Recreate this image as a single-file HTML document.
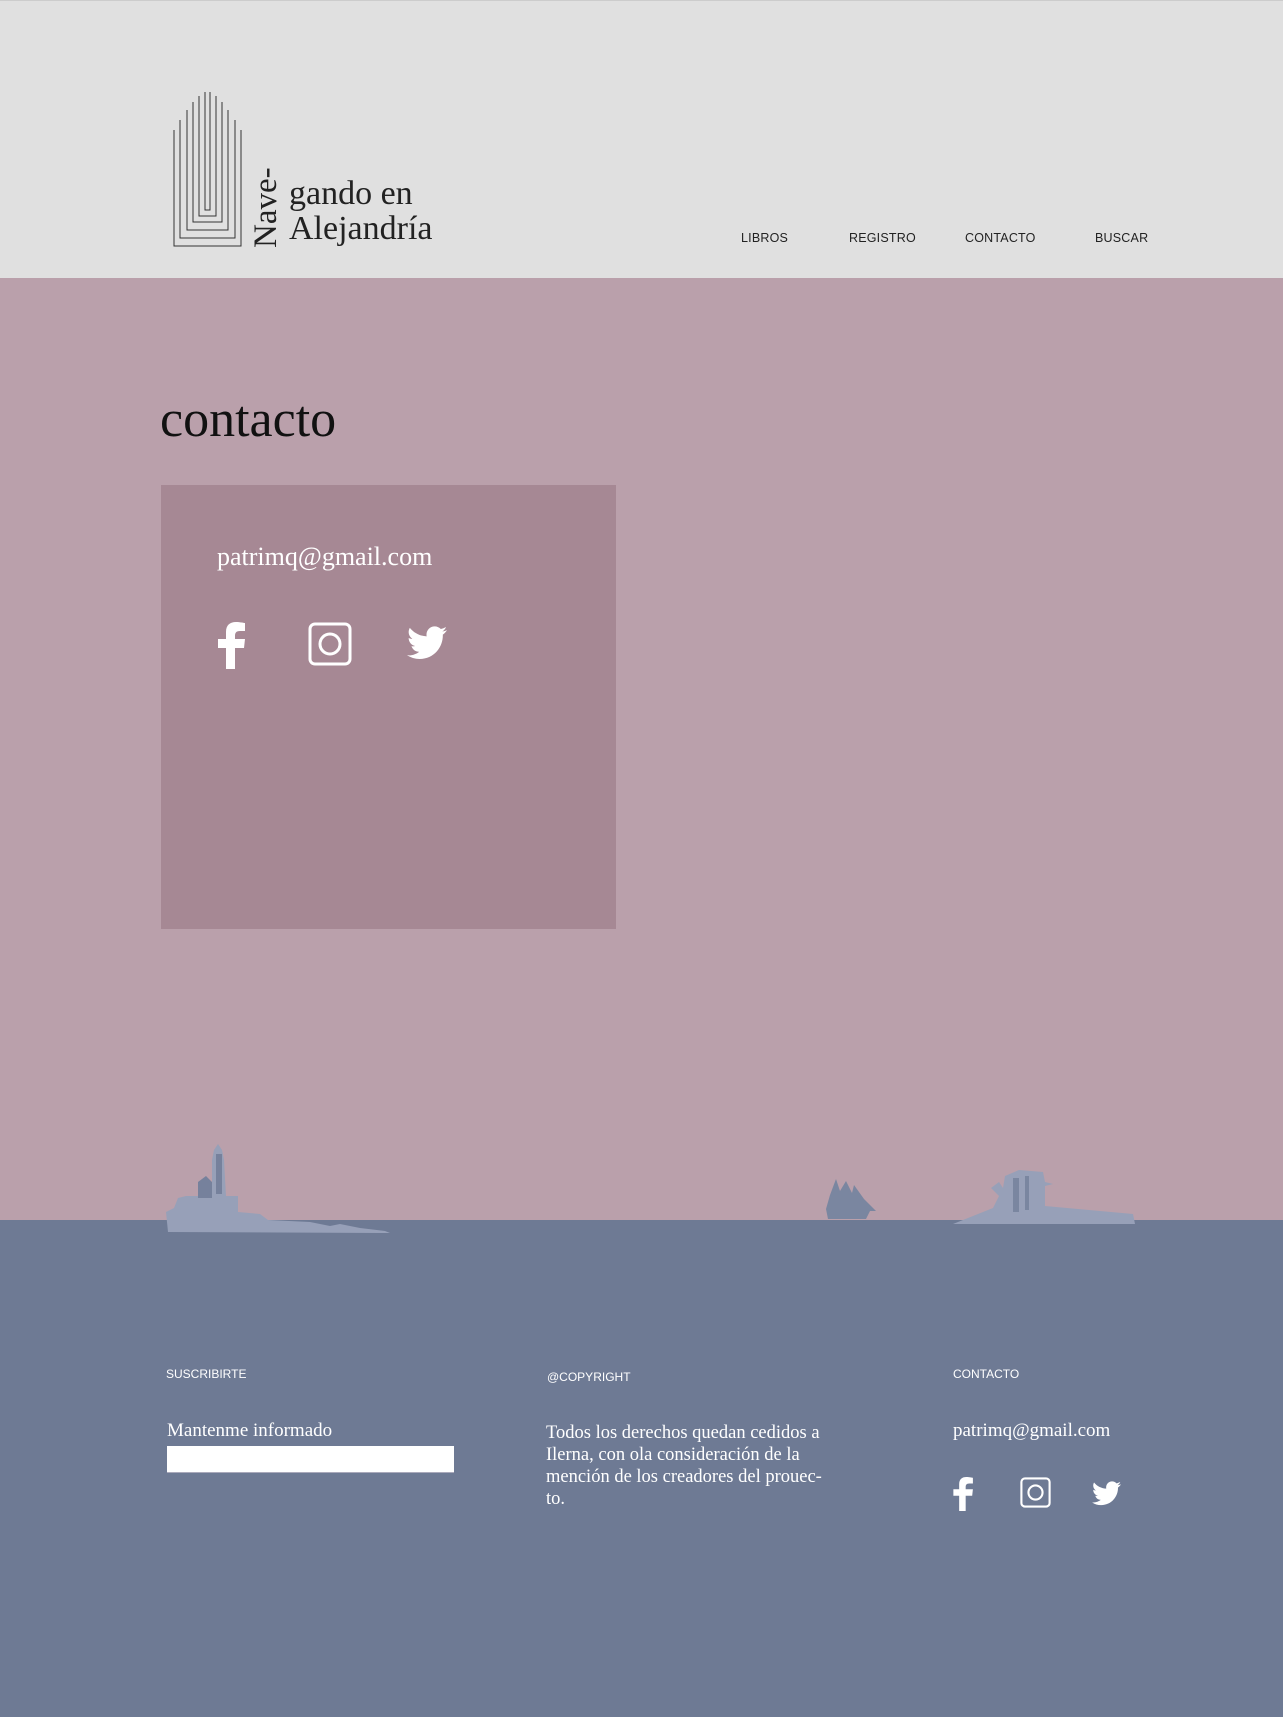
<!DOCTYPE html>
<html><head><meta charset="utf-8">
<style>
*{margin:0;padding:0;box-sizing:border-box}
body{width:1283px;height:1717px;position:relative;overflow:hidden;background:#baa0ab;font-family:"Liberation Serif",serif}
.abs{position:absolute}
.hdr{left:0;top:0;width:1283px;height:278px;background:#e0e0e0;border-top:1px solid #ccc}
.nav{top:231px;font-family:"Liberation Sans",sans-serif;font-size:12.5px;color:#222;letter-spacing:.2px}
.water{left:0;top:1220px;width:1283px;height:497px;background:#6e7a94}
.ft{font-family:"Liberation Sans",sans-serif;font-size:12px;color:#fff}
.wt{color:#fff}
</style></head><body>
<div class="abs hdr"></div>
<svg class="abs" style="left:170px;top:92px" width="80" height="160" viewBox="0 0 80 160" fill="none" stroke="#333" stroke-width="1">
<path d="M4 38V154H71V38"/><path d="M10 28V146H65V28"/><path d="M17 18V138H58V18"/><path d="M23 10V130H52V10"/><path d="M29 4V124H46V4"/><path d="M35 0V118H40V0"/>
</svg>
<div class="abs" style="left:250px;top:248px;transform:rotate(-90deg);transform-origin:0 0;font-size:33px;color:#222;white-space:nowrap;line-height:33px">Nave-</div>
<div class="abs" style="left:289px;top:176px;font-size:34px;color:#222;line-height:35px">gando en<br>Alejandría</div>
<div class="abs nav" style="left:741px">LIBROS</div>
<div class="abs nav" style="left:849px">REGISTRO</div>
<div class="abs nav" style="left:965px">CONTACTO</div>
<div class="abs nav" style="left:1095px">BUSCAR</div>

<div class="abs" style="left:160px;top:390px;font-size:52px;color:#111;line-height:60px">contacto</div>
<div class="abs" style="left:161px;top:485px;width:455px;height:444px;background:#a68894"></div>
<div class="abs wt" style="left:217px;top:542px;font-size:26px">patrimq@gmail.com</div>
<svg class="abs" style="left:218px;top:622px" width="28" height="47" viewBox="0 0 28 47"><path fill="#fff" d="M8 47V26H0V17H8V10C8 3 12 0 18 0C22 0 26 1 27 1V9H22C18 9 17 11 17 14V17H27L26 26H17V47Z"/></svg>
<svg class="abs" style="left:308px;top:622px" width="44" height="44" viewBox="0 0 44 44" fill="none" stroke="#fff" stroke-width="3"><rect x="2" y="2" width="40" height="40" rx="5"/><circle cx="22" cy="22" r="10"/></svg>
<svg class="abs" style="left:407px;top:626px" width="40" height="34" viewBox="0 0 24 20"><path fill="#fff" d="M24 2.3c-.9.4-1.8.7-2.8.8 1-.6 1.8-1.6 2.2-2.7-1 .6-2 1-3.1 1.2C19.3.6 18 0 16.6 0c-2.7 0-4.9 2.2-4.9 4.9 0 .4 0 .8.1 1.1C7.7 5.8 4.1 3.9 1.7.9c-.4.7-.7 1.6-.7 2.5 0 1.7.9 3.2 2.2 4.1-.8 0-1.6-.2-2.2-.6v.1c0 2.4 1.7 4.4 3.9 4.8-.4.1-.8.2-1.3.2-.3 0-.6 0-.9-.1.6 2 2.4 3.4 4.6 3.4-1.7 1.3-3.8 2.1-6.1 2.1-.4 0-.8 0-1.2-.1C2.2 18.8 4.8 19.6 7.5 19.6c9.1 0 14-7.5 14-14v-.6c1-.7 1.8-1.6 2.5-2.7z"/></svg>

<div class="abs water"></div>
<!-- silhouettes -->
<svg class="abs" style="left:160px;top:1140px" width="230" height="95" viewBox="0 0 230 95">
<path fill="#97a0b8" d="M8 92L6 72 14 68 18 58 26 56 52 56 52 20 54 10 58 4 62 10 64 20 66 56 78 56 78 72 100 74 108 80 150 82 170 86 180 84 200 88 225 91 230 93Z"/>
<path fill="#76819c" d="M38 58L38 42 46 36 52 42 52 58Z M56 14h6v40h-6z"/>
</svg>
<svg class="abs" style="left:822px;top:1175px" width="58" height="48" viewBox="0 0 58 48">
<path fill="#7a86a0" d="M6 44L4 34 8 20 14 4 18 16 24 6 30 18 32 10 42 24 54 36 48 36 44 44Z"/>
</svg>
<svg class="abs" style="left:953px;top:1168px" width="185" height="58" viewBox="0 0 185 58">
<path fill="#97a0b8" d="M0 56L40 40 46 28 38 20 46 14 50 20 52 8 66 2 90 4 92 14 100 16 92 18 92 38 180 46 182 56Z"/>
<path fill="#7a86a0" d="M60 10h6v34h-6z M72 8h4v34h-4z"/>
</svg>

<div class="abs ft" style="left:166px;top:1367px">SUSCRIBIRTE</div>
<div class="abs ft" style="left:547px;top:1370px">@COPYRIGHT</div>
<div class="abs ft" style="left:953px;top:1367px">CONTACTO</div>
<div class="abs wt" style="left:167px;top:1420px;font-size:19px">Mantenme informado</div>
<div class="abs" style="left:167px;top:1446px;width:287px;height:27px;background:#fff;border-bottom:1px solid #aab"></div>
<div class="abs wt" style="left:546px;top:1422px;font-size:18.5px;line-height:22px;width:320px">Todos los derechos quedan cedidos a Ilerna, con ola consideración de la mención de los creadores del prouec-<br>to.</div>
<div class="abs wt" style="left:953px;top:1420px;font-size:19px">patrimq@gmail.com</div>
<svg class="abs" style="left:953px;top:1477px" width="21" height="34" viewBox="0 0 28 47"><path fill="#fff" d="M8 47V26H0V17H8V10C8 3 12 0 18 0C22 0 26 1 27 1V9H22C18 9 17 11 17 14V17H27L26 26H17V47Z"/></svg>
<svg class="abs" style="left:1020px;top:1477px" width="31" height="31" viewBox="0 0 44 44" fill="none" stroke="#fff" stroke-width="3"><rect x="2" y="2" width="40" height="40" rx="5"/><circle cx="22" cy="22" r="10"/></svg>
<svg class="abs" style="left:1092px;top:1481px" width="29" height="25" viewBox="0 0 24 20"><path fill="#fff" d="M24 2.3c-.9.4-1.8.7-2.8.8 1-.6 1.8-1.6 2.2-2.7-1 .6-2 1-3.1 1.2C19.3.6 18 0 16.6 0c-2.7 0-4.9 2.2-4.9 4.9 0 .4 0 .8.1 1.1C7.7 5.8 4.100 3.900 1.7.9c-.4.7-.7 1.6-.7 2.5 0 1.7.9 3.2 2.2 4.1-.8 0-1.6-.2-2.2-.6v.1c0 2.4 1.700 4.4 3.9 4.8-.4.1-.8.2-1.3.2-.3 0-.6 0-.9-.1.6 2 2.4 3.4 4.6 3.4-1.7 1.3-3.8 2.1-6.1 2.1-.4 0-.8 0-1.2-.1C2.2 18.8 4.8 19.6 7.5 19.6c9.1 0 14-7.5 14-14v-.6c1-.7 1.8-1.6 2.5-2.7z"/></svg>
</body></html>
